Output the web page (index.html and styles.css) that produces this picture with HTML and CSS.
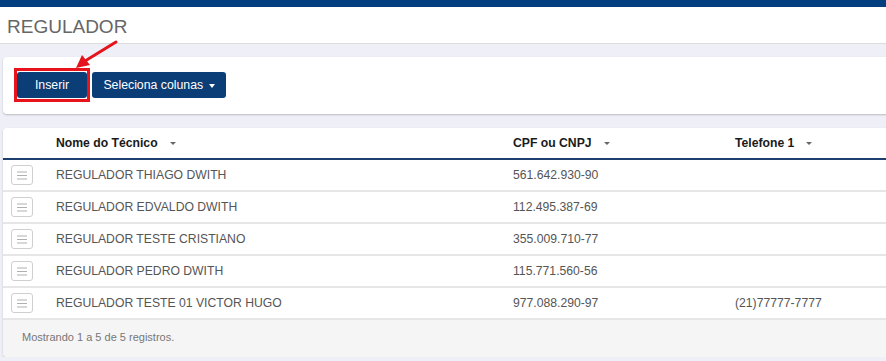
FILE: index.html
```html
<!DOCTYPE html>
<html lang="pt-BR">
<head>
    <meta charset="UTF-8">
    <meta name="viewport" content="width=device-width, initial-scale=1.0">
    <title>Regulador</title>
    <link rel="stylesheet" href="styles.css">
</head>
<body>
    <div class="topbar"></div>
    <div class="page-header">
        <h1 class="page-title">REGULADOR</h1>
    </div>

    <div class="content">
        <div class="panel toolbar">
            <span class="highlight">
                <button class="btn btn-insert">Inserir</button>
            </span>
            <button class="btn btn-dropdown">Seleciona colunas <span class="caret"></span></button>
        </div>

        <div class="panel table-panel">
            <table class="grid">
                <colgroup>
                    <col class="col-icon">
                    <col class="col-name">
                    <col class="col-doc">
                    <col>
                </colgroup>
                <thead>
                    <tr>
                        <th></th>
                        <th class="sortable">Nome do Técnico</th>
                        <th class="sortable">CPF ou CNPJ</th>
                        <th class="sortable">Telefone 1</th>
                    </tr>
                </thead>
                <tbody>
                    <tr>
                        <td><span class="row-btn"><svg width="10" height="9" viewBox="0 0 10 9"><path d="M0 1h10M0 4.5h10M0 8h10" stroke="#b0b0b0" stroke-width="1.2"/></svg></span></td>
                        <td>REGULADOR THIAGO DWITH</td>
                        <td>561.642.930-90</td>
                        <td></td>
                    </tr>
                    <tr>
                        <td><span class="row-btn"><svg width="10" height="9" viewBox="0 0 10 9"><path d="M0 1h10M0 4.5h10M0 8h10" stroke="#b0b0b0" stroke-width="1.2"/></svg></span></td>
                        <td>REGULADOR EDVALDO DWITH</td>
                        <td>112.495.387-69</td>
                        <td></td>
                    </tr>
                    <tr>
                        <td><span class="row-btn"><svg width="10" height="9" viewBox="0 0 10 9"><path d="M0 1h10M0 4.5h10M0 8h10" stroke="#b0b0b0" stroke-width="1.2"/></svg></span></td>
                        <td>REGULADOR TESTE CRISTIANO</td>
                        <td>355.009.710-77</td>
                        <td></td>
                    </tr>
                    <tr>
                        <td><span class="row-btn"><svg width="10" height="9" viewBox="0 0 10 9"><path d="M0 1h10M0 4.5h10M0 8h10" stroke="#b0b0b0" stroke-width="1.2"/></svg></span></td>
                        <td>REGULADOR PEDRO DWITH</td>
                        <td>115.771.560-56</td>
                        <td></td>
                    </tr>
                    <tr>
                        <td><span class="row-btn"><svg width="10" height="9" viewBox="0 0 10 9"><path d="M0 1h10M0 4.5h10M0 8h10" stroke="#b0b0b0" stroke-width="1.2"/></svg></span></td>
                        <td>REGULADOR TESTE 01 VICTOR HUGO</td>
                        <td>977.088.290-97</td>
                        <td>(21)77777-7777</td>
                    </tr>
                </tbody>
            </table>
            <div class="table-footer">Mostrando 1 a 5 de 5 registros.</div>
        </div>
    </div>

    <!-- annotation arrow pointing at the Inserir button -->
    <svg class="annotation" width="60" height="36" viewBox="0 0 60 36">
        <path d="M45 2 L14 21" stroke="#e5141c" stroke-width="3" stroke-linecap="round" fill="none"/>
        <path d="M5 28 L11 15 L19 25 Z" fill="#e5141c"/>
    </svg>
</body>
</html>
```

FILE: styles.css
```css
body {
    font-family: 'Liberation Sans', Arial, sans-serif;
    margin: 0;
    background: #efeff7;
    color: #555;
    overflow: hidden;
    position: relative;
}
.topbar {
    height: 7px;
    background: #033f7e;
}
.page-header {
    background: white;
    height: 36px;
    border-bottom: 1px solid #dcdcdc;
}
.page-title {
    margin: 0;
    padding: 3px 0 0 7px;
    font-size: 19px;
    font-weight: normal;
    line-height: 33px;
    color: #666;
}
.content {
    padding: 13px 0 0 3px;
}
.panel {
    background: white;
    border-radius: 4px;
    margin-right: -10px;
    box-shadow: 0 1px 2px rgba(0,0,0,0.22);
}
.toolbar {
    display: flex;
    align-items: center;
    gap: 2px;
    padding: 11px 0 12px 11px;
}
.highlight {
    display: inline-flex;
    border: 3px solid #e8141c;
    padding: 1px 0;
}
.btn {
    background: #0b3d76;
    color: white;
    border: none;
    height: 26px;
    padding: 0 10px;
    border-radius: 3px;
    font-family: inherit;
    font-size: 12.3px;
    cursor: pointer;
}
.btn-insert {
    width: 70px;
}
.btn-dropdown {
    width: 134px;
}
.caret {
    display: inline-block;
    width: 0;
    height: 0;
    margin-left: 2px;
    vertical-align: middle;
    border-top: 4px solid white;
    border-left: 3px solid transparent;
    border-right: 3px solid transparent;
}
.table-panel {
    margin-top: 14px;
    overflow: hidden;
}
.grid {
    width: 100%;
    border-collapse: collapse;
    table-layout: fixed;
    font-size: 12.2px;
}
.col-icon {
    width: 45px;
}
.col-name {
    width: 457px;
}
.col-doc {
    width: 222px;
}
.grid th {
    height: 30px;
    padding: 0 0 0 8px;
    text-align: left;
    color: #1a1a1a;
    font-weight: bold;
    border-bottom: 2px solid #1d3f6e;
}
.grid th.sortable::after {
    content: '';
    display: inline-block;
    margin-left: 12px;
    vertical-align: middle;
    border-top: 3px solid #666;
    border-left: 3px solid transparent;
    border-right: 3px solid transparent;
}
.grid td {
    height: 30px;
    padding: 0 0 0 8px;
    color: #555;
    border-bottom: 2px solid #e6e6e6;
}
.row-btn {
    display: flex;
    align-items: center;
    justify-content: center;
    width: 20px;
    height: 18px;
    border: 1px solid #cfcfcf;
    border-radius: 3px;
    background: white;
}
.table-footer {
    height: 37px;
    line-height: 34px;
    padding-left: 19px;
    background: #f5f5f5;
    font-size: 11px;
    color: #777;
}
.annotation {
    position: absolute;
    left: 71px;
    top: 40px;
}
```
